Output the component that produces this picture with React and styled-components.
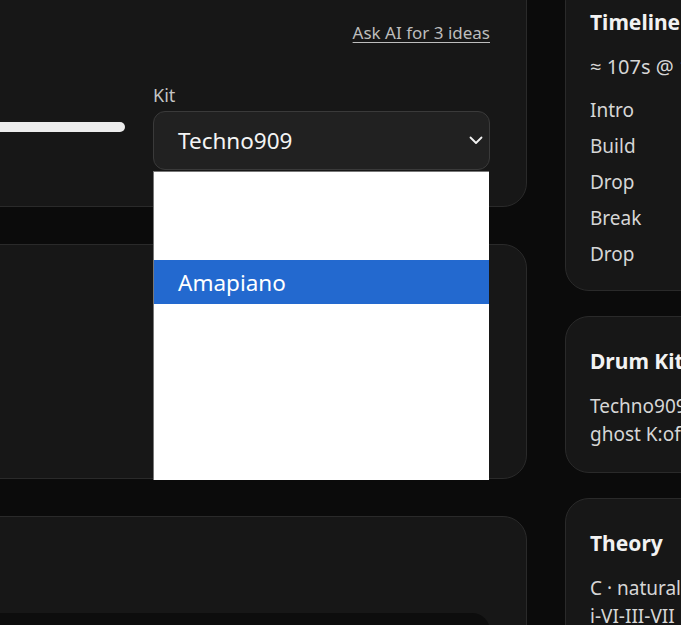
import React from "react";
import styled, { createGlobalStyle } from "styled-components";

const GlobalStyle = createGlobalStyle`
  html, body {
    margin: 0;
    padding: 0;
    background: #0b0b0b;
    overflow: hidden;
  }
  body {
    font-family: "Noto Sans", "Open Sans", sans-serif;
    color: #e8e8e8;
  }
`;

const kits = ["Techno909", "House", "Amapiano", "Trap", "DnB", "Lo-fi", "Afrobeats"];

export default function App() {
  return (
    <>
      <GlobalStyle />
      <Page>
        <MainColumn>
          <Card $pad="0 36px 36px">
            <LinkRow>
              <AskLink href="#">Ask AI for 3 ideas</AskLink>
            </LinkRow>
            <Fields>
              <SliderField>
                <Track />
              </SliderField>
              <KitField>
                <Label>Kit</Label>
                <Select>
                  <span>Techno909</span>
                  <svg width="14" height="9" viewBox="0 0 14 9" fill="none">
                    <path d="M1.5 1.5 L7 7 L12.5 1.5" stroke="#f2f2f2" strokeWidth="1.8" strokeLinecap="round" strokeLinejoin="round" />
                  </svg>
                </Select>
                <Popup>
                  {kits.map((k) => (
                    <Option key={k} $active={k === "Amapiano"}>{k}</Option>
                  ))}
                </Popup>
              </KitField>
            </Fields>
          </Card>
          <Card $height="235px" />
          <Card $pad="96px 36px 36px">
            <Pattern />
          </Card>
        </MainColumn>

        <Side>
          <InfoCard $top="-23px" $bottom="21px">
            <Title>Timeline</Title>
            <Body $size="20px">≈ 107s @ 128 BPM · 56 bars</Body>
            <Sections>
              <li>Intro</li>
              <li>Build</li>
              <li>Drop</li>
              <li>Break</li>
              <li>Drop</li>
            </Sections>
          </InfoCard>
          <InfoCard>
            <Title>Drum Kit</Title>
            <Body>Techno909 · swing 0% ·</Body>
            <Body>ghost K:off S:on H:on</Body>
          </InfoCard>
          <InfoCard>
            <Title>Theory</Title>
            <Body>C · natural minor</Body>
            <Body>i-VI-III-VII</Body>
          </InfoCard>
        </Side>
      </Page>
    </>
  );
}

const Page = styled.div`
  display: flex;
  gap: 38px;
  align-items: flex-start;
  margin-left: -320px;
  width: 1400px;
`;

const MainColumn = styled.div`
  width: 847px;
  display: flex;
  flex-direction: column;
  gap: 37px;
  margin-top: -41px;
`;

const Card = styled.section`
  box-sizing: border-box;
  background: #171717;
  border: 1px solid #2a2a2a;
  border-radius: 24px;
  padding: ${(p) => p.$pad || "36px"};
  height: ${(p) => p.$height || "auto"};
`;

const LinkRow = styled.div`
  display: flex;
  justify-content: flex-end;
  padding-top: 62px;
`;

const AskLink = styled.a`
  font-size: 17px;
  line-height: 22px;
  color: #bdbdbd;
  text-decoration: underline;
  text-underline-offset: 3px;
`;

const Fields = styled.div`
  display: flex;
  gap: 28px;
  margin-top: 40px;
`;

const SliderField = styled.div`
  flex: 1;
  display: flex;
  flex-direction: column;
  padding-top: 38px;
`;

const KitField = styled.div`
  position: relative;
  width: 337px;
  display: flex;
  flex-direction: column;
`;

const Label = styled.div`
  font-size: 18px;
  line-height: 22px;
  color: #c4c4c4;
  margin-bottom: 5px;
`;

const Track = styled.div`
  height: 10px;
  border-radius: 5px;
  background: #ececec;
`;

const Select = styled.div`
  box-sizing: border-box;
  height: 59px;
  display: flex;
  align-items: center;
  justify-content: space-between;
  padding: 0 6px 0 24px;
  background: #212121;
  border: 1px solid #3a3a3a;
  border-radius: 12px;
  font-size: 22.5px;
  color: #f4f4f4;
`;

const Popup = styled.ul`
  position: absolute;
  top: 87px;
  left: 0;
  width: 335px;
  margin: 0;
  padding: 0;
  list-style: none;
  background: #ffffff;
  border-left: 1px solid #777;
  border-top: 1px solid #777;
  z-index: 5;
`;

const Option = styled.li`
  height: 44px;
  display: flex;
  align-items: center;
  padding-left: 24px;
  font-size: 22.5px;
  color: #ffffff;
  background: ${(p) => (p.$active ? "#2369cf" : "#ffffff")};
`;

const Pattern = styled.div`
  height: 200px;
  background: #0d0d0d;
  border-radius: 18px;
`;

const Side = styled.aside`
  width: 420px;
  display: flex;
  flex-direction: column;
  gap: 25px;
`;

const InfoCard = styled.section`
  box-sizing: border-box;
  background: #171717;
  border: 1px solid #2a2a2a;
  border-radius: 24px;
  padding: 24px 24px ${(p) => p.$bottom || "24px"};
  margin-top: ${(p) => p.$top || "0"};
`;

const Title = styled.h3`
  margin: 0 0 11px;
  font-size: 21px;
  line-height: 40px;
  font-weight: 700;
  color: #f2f2f2;
`;

const Body = styled.div`
  font-size: ${(p) => p.$size || "19px"};
  line-height: 28px;
  color: #d6d6d6;
  white-space: nowrap;
`;

const Sections = styled.ul`
  list-style: none;
  margin: 14px 0 0;
  padding: 0;
  display: flex;
  flex-direction: column;
  gap: 6px;
  li {
    font-size: 19px;
    line-height: 30px;
    color: #d6d6d6;
  }
`;
